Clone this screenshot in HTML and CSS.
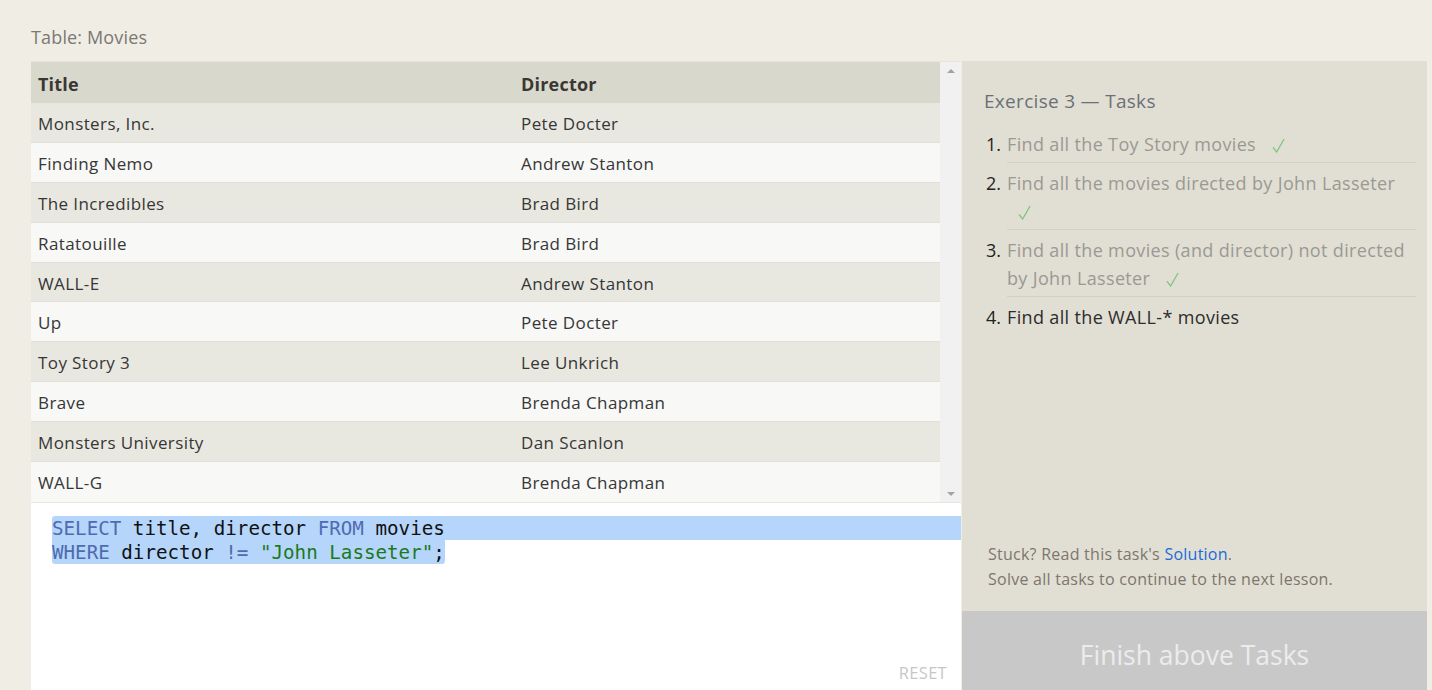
FILE: index.html
```html
<!DOCTYPE html>
<html>
<head>
<meta charset="utf-8">
<link rel="stylesheet" href="styles.css">
</head>
<body>
<div class="page">
  <div class="caption">Table: Movies</div>
  <div class="main">
    <div class="left">
      <div class="table-area">
        <div class="table-scroll">
          <table class="movies">
            <thead><tr><th class="c1">Title</th><th>Director</th></tr></thead>
            <tbody>
              <tr><td>Monsters, Inc.</td><td>Pete Docter</td></tr>
              <tr><td>Finding Nemo</td><td>Andrew Stanton</td></tr>
              <tr><td>The Incredibles</td><td>Brad Bird</td></tr>
              <tr><td>Ratatouille</td><td>Brad Bird</td></tr>
              <tr><td>WALL-E</td><td>Andrew Stanton</td></tr>
              <tr><td>Up</td><td>Pete Docter</td></tr>
              <tr><td>Toy Story 3</td><td>Lee Unkrich</td></tr>
              <tr><td>Brave</td><td>Brenda Chapman</td></tr>
              <tr><td>Monsters University</td><td>Dan Scanlon</td></tr>
              <tr><td>WALL-G</td><td>Brenda Chapman</td></tr>
            </tbody>
          </table>
        </div>
        <div class="scrollbar">
          <span class="arrow up"></span>
          <span class="arrow down"></span>
        </div>
      </div>
      <div class="editor">
        <div class="code-line first"><span class="kw">SELECT</span> title, director <span class="kw">FROM</span> movies</div>
        <div class="code-line"><span class="sel"><span class="kw">WHERE</span> director <span class="kw">!=</span> <span class="str">"John Lasseter"</span>;</span></div>
        <div class="reset">RESET</div>
      </div>
    </div>
    <div class="right">
      <div class="tasks">
        <h2 class="tasks-title">Exercise 3 — Tasks</h2>
        <ol class="task-list">
          <li class="done"><span class="num">1.</span><span class="txt">Find all the Toy Story movies <svg class="check" viewBox="0 0 14 16"><path d="M1 10 L5 15 L13 1"/></svg></span></li>
          <li class="done"><span class="num">2.</span><span class="txt">Find all the movies directed by John Lasseter <svg class="check" viewBox="0 0 14 16"><path d="M1 10 L5 15 L13 1"/></svg></span></li>
          <li class="done"><span class="num">3.</span><span class="txt">Find all the movies (and director) not directed by John Lasseter <svg class="check" viewBox="0 0 14 16"><path d="M1 10 L5 15 L13 1"/></svg></span></li>
          <li class="current"><span class="num">4.</span><span class="txt">Find all the WALL-* movies</span></li>
        </ol>
        <div class="help">
          <p>Stuck? Read this task's <a href="#">Solution</a>.</p>
          <p>Solve all tasks to continue to the next lesson.</p>
        </div>
      </div>
      <div class="finish">Finish above Tasks</div>
    </div>
  </div>
</div>
</body>
</html>
```
FILE: styles.css
```css
html, body {
  margin: 0;
  padding: 0;
  background: #f0ede5;
  font-family: "Open Sans", "Liberation Sans", sans-serif;
  overflow: hidden;
}
.page {
  padding: 24px 5px 0 31px;
  height: 690px;
  box-sizing: border-box;
  display: flex;
  flex-direction: column;
}
.caption {
  font-size: 18px;
  color: #7b7874;
  line-height: 26px;
  height: 37px;
  letter-spacing: 0.15px;
}
.main {
  flex: 1;
  display: flex;
  min-height: 0;
}
.left {
  width: 930px;
  display: flex;
  flex-direction: column;
  background: #fff;
}
.table-area {
  display: flex;
  height: 442px;
  border-top: 1px solid #e6e4dc;
  border-bottom: 1px solid #e8e6de;
  box-sizing: border-box;
}
.table-scroll {
  width: 909px;
  overflow: hidden;
  background: #f8f8f7;
}
.movies {
  border-collapse: collapse;
  width: 909px;
  table-layout: fixed;
  font-size: 17px;
  letter-spacing: 0.4px;
  color: #333;
}
.movies th {
  background: #d9d8cc;
  text-align: left;
  font-weight: 700;
  font-size: 18px;
  letter-spacing: 0.2px;
  height: 41px;
  padding: 2px 7px 0;
  box-sizing: border-box;
  color: #3a3733;
}
.movies th.c1 { width: 483px; }
.movies td {
  height: 39.8px;
  box-sizing: border-box;
  padding: 2px 7px 0;
  border-bottom: 1px solid #e1e0d8;
  color: #363636;
}
.movies tbody tr:nth-child(odd) td { background: #e9e8e0; }
.movies tbody tr:nth-child(even) td { background: #f8f8f7; }
.movies tbody tr:last-child td { border-bottom: 0; }
.scrollbar {
  width: 21px;
  background: #f1f1f1;
  display: flex;
  flex-direction: column;
  justify-content: space-between;
  align-items: center;
  padding: 7px 0 6px;
  box-sizing: border-box;
}
.arrow {
  width: 0;
  height: 0;
  border-left: 4px solid transparent;
  border-right: 4px solid transparent;
}
.arrow.up { border-bottom: 4px solid #a3a3a3; }
.arrow.down { border-top: 4px solid #a3a3a3; }
.editor {
  flex: 1;
  background: #fff;
  padding: 13px 0 0 21px;
  position: relative;
  font-family: "DejaVu Sans Mono", "Liberation Mono", monospace;
  font-size: 19.2px;
  color: #111;
}
.code-line {
  height: 24px;
  line-height: 26px;
  white-space: pre;
}
.code-line.first {
  background: #b5d5fb;
  border-top-left-radius: 3px;
}
.sel {
  display: inline-block;
  height: 24px;
  background: #b5d5fb;
  border-radius: 0 0 3px 3px;
}
.kw { color: #4e6bb0; }
.str { color: #1c7a1c; }
.reset {
  position: absolute;
  right: 14px;
  bottom: 6px;
  font-family: "Open Sans", "Liberation Sans", sans-serif;
  font-size: 16.5px;
  color: #c7c7c7;
  letter-spacing: 0.3px;
}
.right {
  width: 465px;
  margin-left: 1px;
  display: flex;
  flex-direction: column;
  background: #e1dfd4;
}
.tasks {
  flex: 1;
  padding: 26px 11px 0 22px;
  display: flex;
  flex-direction: column;
}
.tasks-title {
  margin: 0 0 10px;
  font-weight: 400;
  font-size: 19px;
  letter-spacing: 0.3px;
  color: #6b7078;
  line-height: 28px;
}
.task-list {
  list-style: none;
  margin: 0;
  padding: 0;
  font-size: 18px;
  letter-spacing: 0.35px;
  line-height: 28px;
}
.task-list li {
  display: flex;
  padding: 6px 0 0 2px;
}
.task-list li:first-child { padding-top: 5px; }
.task-list li .num {
  width: 21px;
  flex: none;
  color: #222;
  letter-spacing: 0;
}
.task-list li .txt {
  flex: 1;
}
.task-list li.done .txt {
  color: #9b9993;
  border-bottom: 1px solid #d3d1c6;
  padding-bottom: 4px;
}
.task-list li.current .txt { color: #2c2c2c; }
.check {
  width: 13px;
  height: 15px;
  margin-left: 11px;
  margin-right: 4px;
  vertical-align: -2px;
  fill: none;
  stroke: #7cc77c;
  stroke-width: 1.4;
}
.help {
  margin-top: auto;
  padding: 0 0 19px 4px;
  font-size: 16px;
  letter-spacing: 0.25px;
  color: #7d766c;
  line-height: 25px;
}
.help p { margin: 0; }
.help a { color: #1a6ad8; text-decoration: none; }
.finish {
  height: 79px;
  background: #c8c8c8;
  color: #ececec;
  font-size: 26.5px;
  display: flex;
  align-items: center;
  justify-content: center;
  padding-top: 8px;
  box-sizing: border-box;
}
```
